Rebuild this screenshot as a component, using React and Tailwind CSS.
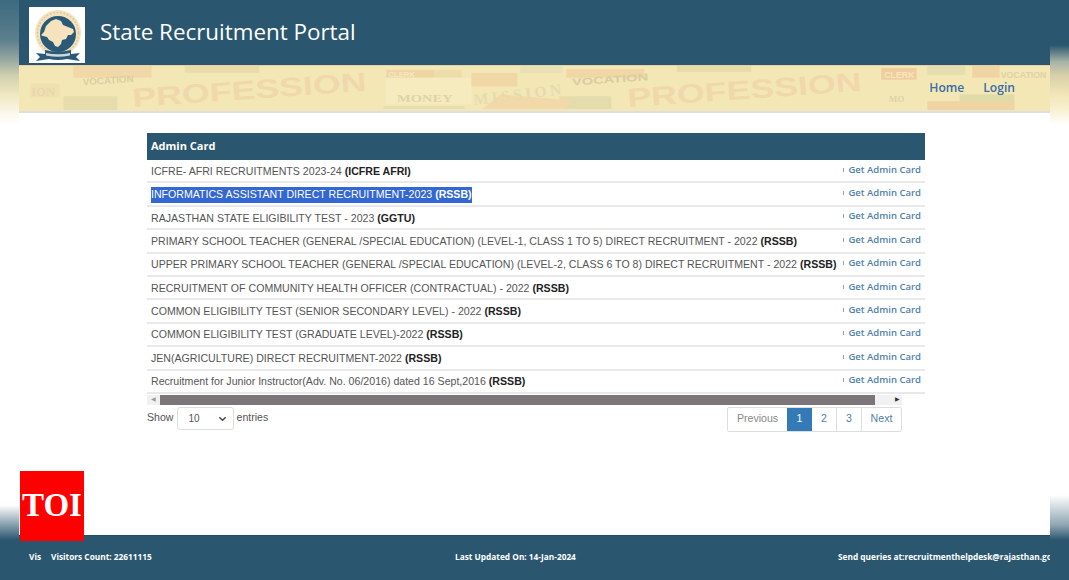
const rows = [
  ['ICFRE- AFRI RECRUITMENTS 2023-24', 'ICFRE AFRI'],
  ['INFORMATICS ASSISTANT DIRECT RECRUITMENT-2023', 'RSSB'],
  ['RAJASTHAN STATE ELIGIBILITY TEST - 2023', 'GGTU'],
  ['PRIMARY SCHOOL TEACHER (GENERAL /SPECIAL EDUCATION) (LEVEL-1, CLASS 1 TO 5) DIRECT RECRUITMENT - 2022', 'RSSB'],
  ['UPPER PRIMARY SCHOOL TEACHER (GENERAL /SPECIAL EDUCATION) (LEVEL-2, CLASS 6 TO 8) DIRECT RECRUITMENT - 2022', 'RSSB'],
  ['RECRUITMENT OF COMMUNITY HEALTH OFFICER (CONTRACTUAL) - 2022', 'RSSB'],
  ['COMMON ELIGIBILITY TEST (SENIOR SECONDARY LEVEL) - 2022', 'RSSB'],
  ['COMMON ELIGIBILITY TEST (GRADUATE LEVEL)-2022', 'RSSB'],
  ['JEN(AGRICULTURE) DIRECT RECRUITMENT-2022', 'RSSB'],
  ['Recruitment for Junior Instructor(Adv. No. 06/2016) dated 16 Sept,2016', 'RSSB'],
];

const Logo = () => (
  <svg viewBox="0 0 56 56" className="w-[56px] h-[56px] bg-white shrink-0">
    <circle cx="29" cy="26" r="23" fill="#f6e2bc" />
    <circle cx="29" cy="27" r="18" fill="#2a5a78" />
    <circle cx="29" cy="26" r="20.5" fill="none" stroke="#dcc9a4" strokeWidth="1.5" strokeDasharray="2 1.5" />
    <path d="M12 28l3-3 2-6 5-5 5-2 5 2 2 4 5 2 5 2 1 3-3 3-3 0-2 4-4 1-1 4-3 3-3-1-2-4-4-2-2-3-4-1z" fill="#f6e2bc" />
    <path d="M7 46l9 1 0-4q13 3 26 0l0 4 9-1-4 4 4 4-13-2q-9 2-18 0l-13 2 4-4z" fill="#2a5a78" />
    <path d="M17 46q12 2.500 24 0l0 2.500q-12 2.500-24 0z" fill="#cdd8dc" />
  </svg>
);

const BannerArt = () => (
  <svg className="absolute inset-0 w-full h-full opacity-75" viewBox="0 0 1031 46" fontFamily="Liberation Sans, sans-serif">
    <rect x="44" y="0" width="80" height="12" fill="#f0d3a5" />
    <rect x="34" y="31" width="55" height="14" fill="#e3d9a8" />
    <rect x="0" y="18" width="30" height="14" fill="#f0dfb0" />
    <rect x="158" y="0" width="76" height="7" fill="#e6d8a6" />
    <rect x="364" y="4" width="49" height="8" fill="#f0cf9f" />
    <rect x="413" y="4" width="28" height="8" fill="#ecdaa8" />
    <rect x="364" y="12" width="87" height="27" fill="#f7edc3" />
    <rect x="451" y="7" width="47" height="14" fill="#f2d2a1" />
    <rect x="361" y="41" width="83" height="3" fill="#e3dcae" />
    <rect x="501" y="0" width="43" height="7" fill="#e6dfb2" />
    <rect x="548" y="3" width="80" height="9" fill="#f2d2a1" />
    <rect x="541" y="31" width="53" height="13" fill="#dfd9a9" />
    <path d="M462 44l19-15 73 6-8 9z" fill="#f4d5a5" />
    <rect x="661" y="0" width="76" height="6" fill="#e4d8a6" />
    <rect x="870" y="2" width="36" height="12" fill="#efc596" />
    <rect x="917" y="0" width="39" height="9" fill="#e0dcae" />
    <rect x="963" y="0" width="28" height="12" fill="#f0cf9f" />
    <rect x="950" y="29" width="56" height="15" fill="#dcd8a6" />
    <rect x="917" y="36" width="89" height="9" fill="#f0cf9f" />
    <text x="54" y="20" fontSize="10" fontWeight="bold" fill="#d3c79c" transform="rotate(-4 54 20)">VOCATION</text>
    <text x="1" y="31" fontSize="13" fontFamily="Liberation Serif, serif" fill="#e2d3a4">ION</text>
    <text x="375" y="37" fontSize="10" fontWeight="bold" fontFamily="Liberation Serif, serif" fill="#d9cda0" textLength="57" lengthAdjust="spacingAndGlyphs">MONEY</text>
    <text x="454" y="40" fontSize="16" fontFamily="Liberation Serif, serif" fill="#e0d8ac" textLength="90" transform="rotate(-7 454 40)">MISSION</text>
    <text x="554" y="20" fontSize="10" fontWeight="bold" fill="#cfc59a" textLength="78" lengthAdjust="spacingAndGlyphs" transform="rotate(-4 554 20)">VOCATION</text>
    <text x="105" y="42" fontSize="27" fill="#f1d4a8" textLength="240" lengthAdjust="spacingAndGlyphs" transform="rotate(-4 105 42)">PROFESSION</text>
    <text x="611" y="42" fontSize="27" fill="#f1d4a8" textLength="240" lengthAdjust="spacingAndGlyphs" transform="rotate(-4 611 42)">PROFESSION</text>
    <text x="873" y="12" fontSize="9" fontWeight="bold" fill="#f6e8c4">CLERK</text>
    <text x="366" y="11" fontSize="8" fontWeight="bold" fill="#f6e8c4">CLERK</text>
    <text x="992" y="12" fontSize="9" fontWeight="bold" fill="#d8cca0">VOCATION</text>
    <text x="878" y="37" fontSize="9" fontFamily="Liberation Serif, serif" fill="#d8cca0">MO</text>
  </svg>
);

export default function App() {
  return (
    <div className="w-[1069px] h-[580px] flex overflow-hidden bg-white font-['Liberation_Sans',sans-serif]">
      <div className="w-[19px] shrink-0 bg-[linear-gradient(to_bottom,#3d6a80_0px,#5c7f8d_40px,#98a8a0_60px,#cfcfae_75px,#f0e8c0_95px,#fdf9ee_115px,#ffffff_125px,#ffffff_505px,#2a566f_540px)]" />

      <div className="relative flex-1 flex flex-col min-w-0">
        <header className="h-[65px] shrink-0 bg-[#2a566f] flex items-start pl-[10px] pt-[7px]">
          <Logo />
          <h1 className="ml-[15px] self-center -mt-[9px] font-['Open_Sans',sans-serif] text-[22.4px] text-white whitespace-nowrap">State Recruitment Portal</h1>
        </header>

        <nav className="relative h-[46px] shrink-0 bg-[#f3e7b6] border-t border-[#e8cfa8] flex items-center justify-end pr-[35px] gap-[19px] font-['Open_Sans',sans-serif] font-semibold text-[12.1px] text-[#3b6ea5] overflow-hidden">
          <BannerArt />
          <span className="relative">Home</span>
          <span className="relative">Login</span>
        </nav>
        <div className="h-[2px] shrink-0 bg-[#dfdfdf]" />

        <main className="flex-1 pt-[20px] pl-[128px]">
          <div className="w-[778px]">
            <div className="h-[27px] bg-[#2a566f] flex items-center pl-[4px] font-['Open_Sans',sans-serif] font-bold text-[11px] text-white">Admin Card</div>
            {rows.map(([title, org], i) => (
              <div key={title} className="h-[23.4px] flex items-center justify-between pl-[4px] pr-[4px] border-b-2 border-[#e9e9e9] last:border-b-0 text-[10.6px] text-[#555] whitespace-nowrap">
                <span className={i === 1 ? 'mt-[2px] bg-[#3367d1] text-white' : 'mt-[2px]'}>
                  {title} <b className={i === 1 ? 'text-white' : 'text-[#222]'}>({org})</b>
                </span>
                <span className="flex items-center gap-[4px] -mt-[2px] font-['Open_Sans',sans-serif] font-semibold text-[9.5px] text-[#4f81a8]">
                  <span className="w-px h-[4px] bg-[#88a8c0]" />
                  Get Admin Card
                </span>
              </div>
            ))}
            <div className="w-[755px] h-[10px] mt-px flex items-center bg-[#f1f1f1]">
              <span className="w-[13px] text-center text-[6px] text-[#999]">◀</span>
              <div className="w-[715px] h-full bg-[#7b7679]" />
              <span className="flex-1 text-right pr-[2px] text-[6px] text-[#333]">▶</span>
            </div>
            <div className="w-[755px] flex justify-between items-start mt-[2px]">
              <div className="flex items-center gap-[3px] text-[10.6px] text-[#555]">
                <span>Show</span>
                <div className="w-[57px] h-[23px] flex items-center justify-between pl-[11px] pr-[6px] border border-[#ddd] rounded-[3px] text-[10px]">
                  10
                  <svg viewBox="0 0 10 10" className="w-[9px] h-[9px]"><path d="M1.500 3.500L5 7l3.500-3.500" fill="none" stroke="#444" strokeWidth="1.6" /></svg>
                </div>
                <span>entries</span>
              </div>
              <div className="flex h-[25px] text-[10.6px] text-[#4f81a8] border border-[#ddd] rounded-[2px]">
                <span className="w-[59px] flex items-center justify-center text-[#888]">Previous</span>
                <span className="w-[25px] flex items-center justify-center bg-[#337ab7] text-white">1</span>
                <span className="w-[25px] flex items-center justify-center border-r border-[#ddd]">2</span>
                <span className="w-[25px] flex items-center justify-center border-r border-[#ddd]">3</span>
                <span className="w-[39px] flex items-center justify-center">Next</span>
              </div>
            </div>
          </div>
        </main>

        <footer className="h-[45px] shrink-0 bg-[#2a566f] border-t border-[#244c63] flex items-center font-['Open_Sans',sans-serif] font-bold text-[8.3px] text-white whitespace-nowrap overflow-hidden pb-px">
          <span className="ml-[10px] w-[22px] shrink-0">Vis</span>
          <span className="w-[404px] shrink-0">Visitors Count: 22611115</span>
          <span className="w-[383px] shrink-0">Last Updated On: 14-Jan-2024</span>
          <span className="shrink-0">Send queries at:recruitmenthelpdesk@rajasthan.gov</span>
        </footer>

        <div className="absolute left-px top-[471px] w-[64px] h-[70px] bg-[#ff0000] flex items-center justify-center font-['Liberation_Serif',serif] font-bold text-[33px] text-white">TOI</div>
      </div>

      <div className="w-[19px] shrink-0 bg-[linear-gradient(to_bottom,#2a566f_0px,#2a566f_45px,#a8b4a8_62px,#d6cfa8_75px,#f3e7b8_95px,#f7efce_108px,#ffffff_125px,#ffffff_495px,#8fa6b2_525px,#2a566f_540px)]" />
    </div>
  );
}
